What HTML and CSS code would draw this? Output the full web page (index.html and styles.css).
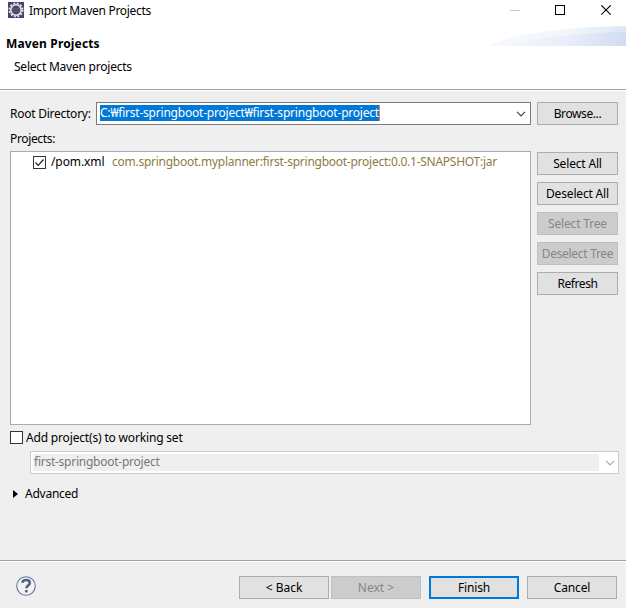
FILE: index.html
```html
<!DOCTYPE html>
<html lang="en">
<head>
<meta charset="utf-8">
<title>Import Maven Projects</title>
<link rel="stylesheet" href="styles.css">
</head>
<body>
<div class="dialog">
  <header class="banner">
    <div class="titlebar">
      <svg class="app-icon" width="16" height="16" viewBox="0 0 16 16">
        <rect width="16" height="16" fill="#4b3f72"/>
        <circle cx="8" cy="8" r="6.5" fill="none" stroke="#e4e2ea" stroke-width="2" stroke-dasharray="1.900 1.500"/>
        <circle cx="8" cy="8" r="5.200" fill="#4a4560" stroke="#dedde2" stroke-width="1.600"/>
        <path d="M4.500 6.500h7M4 8h8M4.500 9.500h7" stroke="#69657c" stroke-width=".6"/>
      </svg>
      <span class="title"><span class="t-title">Import Maven Projects</span></span>
      <svg class="controls" width="104" height="12" viewBox="0 0 104 12">
        <path d="M0 5.5h10" stroke="#c8c8c8"/>
        <rect x="45.5" y=".5" width="9" height="9" fill="none" stroke="#000"/>
        <path d="M91.3 .3l9.4 9.4M100.7 .3l-9.4 9.4" stroke="#000" stroke-width="1.1"/>
      </svg>
    </div>
    <h1 class="heading"><span class="t-heading">Maven Projects</span></h1>
    <p class="subheading"><span class="t-sub">Select Maven projects</span></p>
    <svg class="swoosh" width="138" height="20" viewBox="0 0 138 20">
      <defs>
        <linearGradient id="outer"><stop offset="0" stop-color="#f6fafd"/><stop offset=".6" stop-color="#f1f6fc"/><stop offset="1" stop-color="#dce6f5"/></linearGradient>
        <linearGradient id="inner"><stop offset="0" stop-color="#f5f8fc"/><stop offset=".55" stop-color="#e8edf8"/><stop offset="1" stop-color="#d2dcf3"/></linearGradient>
      </defs>
      <path d="M0 20C20 9 75 1 138 0V20Z" fill="url(#outer)"/>
      <path d="M14 20C45 12 90 7 138 6V20Z" fill="url(#inner)"/>
    </svg>
  </header>

  <main class="content">
    <div class="root-row">
      <label class="root-label"><span class="t-root">Root Directory:</span></label>
      <div class="combo">
        <span class="selection"><span class="t-path">C:₩first-springboot-project₩first-springboot-project</span></span>
        <svg class="chevron" width="10" height="6" viewBox="0 0 10 6"><path d="M1 .8l4 4 4-4" fill="none" stroke="#444" stroke-width="1.2"/></svg>
      </div>
      <button class="btn"><span class="t-browse">Browse...</span></button>
    </div>
    <div class="projects-label"><span class="t-projects">Projects:</span></div>
    <div class="projects-row">
      <div class="tree">
        <div class="tree-item">
          <svg class="check" width="13" height="13" viewBox="0 0 13 13"><rect x=".5" y=".5" width="12" height="12" fill="#fff" stroke="#333"/><path d="M2.5 6.5l2.7 2.8L10.5 3.5" fill="none" stroke="#222" stroke-width="1.2"/></svg>
          <span class="pom"><span class="t-pom">/pom.xml</span></span>
          <span class="artifact"><span class="t-art">com.springboot.myplanner:first-springboot-project:0.0.1-SNAPSHOT:jar</span></span>
        </div>
      </div>
      <div class="side">
        <button class="btn"><span class="t-selall">Select All</span></button>
        <button class="btn"><span class="t-desall">Deselect All</span></button>
        <button class="btn" disabled><span class="t-seltree">Select Tree</span></button>
        <button class="btn" disabled><span class="t-destree">Deselect Tree</span></button>
        <button class="btn"><span class="t-refresh">Refresh</span></button>
      </div>
    </div>
    <div class="working-set">
      <svg class="check" width="13" height="13" viewBox="0 0 13 13"><rect x=".5" y=".5" width="12" height="12" fill="#fff" stroke="#333"/></svg>
      <span class="t-add">Add project(s) to working set</span>
    </div>
    <div class="combo combo-disabled">
      <span class="field"><span class="t-ws">first-springboot-project</span></span>
      <svg class="chevron" width="10" height="6" viewBox="0 0 10 6"><path d="M1 .8l4 4 4-4" fill="none" stroke="#aaa" stroke-width="1.2"/></svg>
    </div>
    <div class="advanced">
      <svg width="5" height="8" viewBox="0 0 5 8"><path d="M0 0l5 4-5 4z" fill="#000"/></svg>
      <span class="t-adv">Advanced</span>
    </div>
  </main>

  <footer class="footer">
    <svg class="help" width="20" height="20" viewBox="0 0 20 20">
      <circle cx="10" cy="10" r="9.3" fill="#f3f3f4" stroke="#63789b" stroke-width="1.1"/>
      <path d="M6.2 6.800C6.500 4.900 8 4 10.100 4c2.200 0 3.700 1.100 3.700 2.900 0 2.700-3.400 2.600-3.400 5.400" fill="none" stroke="#4d6185" stroke-width="2.500"/>
      <rect x="9" y="14" width="2.600" height="2.400" fill="#4d6185"/>
    </svg>
    <div class="nav">
      <button class="btn"><span class="t-back">&lt; Back</span></button>
      <button class="btn" disabled><span class="t-next">Next &gt;</span></button>
    </div>
    <button class="btn primary"><span class="t-finish">Finish</span></button>
    <button class="btn"><span class="t-cancel">Cancel</span></button>
  </footer>
</div>
</body>
</html>
```
FILE: styles.css
```css
* { box-sizing: border-box; }
body {
  margin: 0;
  background: #efefef;
  color: #000;
  font: 12px/16px "Noto Sans", "Noto Sans CJK KR", sans-serif;
  white-space: nowrap;
}
.dialog { width: 626px; height: 608px; display: flex; flex-direction: column; overflow: hidden; }
.banner { position: relative; height: 91px; background: #fff; border-bottom: 1px solid #fff; box-shadow: inset 0 -1px #a0a0a0; }
.titlebar { display: flex; align-items: flex-start; height: 36px; padding: 2px 12px 0 8px; }
.title { margin: 1px 0 0 5px; flex: 1; }
.controls { margin-top: 3px; }
.heading { margin: 0; padding-left: 6px; font-size: 12px; line-height: 16px; }
.subheading { margin: 7px 0 0; padding-left: 14px; }
.swoosh { position: absolute; right: 0; top: 26px; }

.content { flex: 1; padding: 11px 7px 0 10px; }
.root-row { display: flex; height: 23px; }
.root-label { width: 86px; padding-top: 4px; }
.combo { width: 435px; height: 23px; display: flex; align-items: center; justify-content: space-between; padding: 0 4px 0 3px; background: #fff; border: 1px solid #7a7a7a; }
.selection { height: 16px; line-height: 15px; margin-bottom: 1px; background: #0078d7; color: #fff; border-right: 1px solid #f08040; }
.btn { width: 81px; height: 23px; padding: 0; border: 1px solid #adadad; background: #e1e1e1; color: #000; font: inherit; line-height: 20px; text-align: center; }
.btn:disabled { background: #ccc; border-color: #bfbfbf; color: #868686; }
.root-row .btn { margin-left: 6px; }
.projects-label { height: 26px; padding-top: 6px; }
.projects-row { display: flex; gap: 6px; }
.tree { width: 521px; height: 274px; background: #fff; border: 1px solid #a9a9ae; }
.tree-item { display: flex; padding: 2px 0 0 22px; }
.tree-item .check { margin-top: 2px; }
.pom { margin-left: 5px; width: 61px; }
.artifact { color: #8f7a45; }
.side { display: flex; flex-direction: column; gap: 7px; padding-top: 1px; }
.working-set { display: flex; align-items: center; gap: 3px; height: 26px; }
.working-set .check { margin-top: -1px; }
.combo-disabled { width: 589px; margin-left: 20px; padding: 0 3px 0 2px; border-color: #ccc; }
.field { width: 566px; height: 17px; line-height: 15px; padding-left: 1px; background: #efefef; color: #777; }
.advanced { display: flex; align-items: center; gap: 7px; margin-top: 12px; padding-left: 3px; }

.footer { display: flex; height: 48px; padding: 15px 9px 0 16px; border-top: 1px solid #a0a0a0; box-shadow: inset 0 1px #fff; }
.footer .btn { width: 90px; }
.nav { display: flex; gap: 2px; margin-left: auto; }
.footer > .btn { margin-left: 8px; }
.footer .primary { border: 2px solid #0078d7; line-height: 18px; }

/* per-label tracking */
.t-title { letter-spacing: -.3px; }
.t-heading { letter-spacing: .15px; }
.t-sub { letter-spacing: -.22px; }
.t-root { letter-spacing: -.25px; }
.t-path { letter-spacing: -.21px; }
.t-projects { letter-spacing: -.35px; }
.t-pom { letter-spacing: -.1px; }
.t-art { letter-spacing: -.26px; }
.t-browse { letter-spacing: -.4px; }
.t-selall, .t-desall, .t-seltree, .t-finish, .t-cancel { letter-spacing: -.17px; }
.t-destree { letter-spacing: -.3px; }
.t-refresh { letter-spacing: -.4px; }
.t-add { letter-spacing: -.17px; }
.t-ws { letter-spacing: -.25px; }
.t-adv { letter-spacing: -.25px; }
```
